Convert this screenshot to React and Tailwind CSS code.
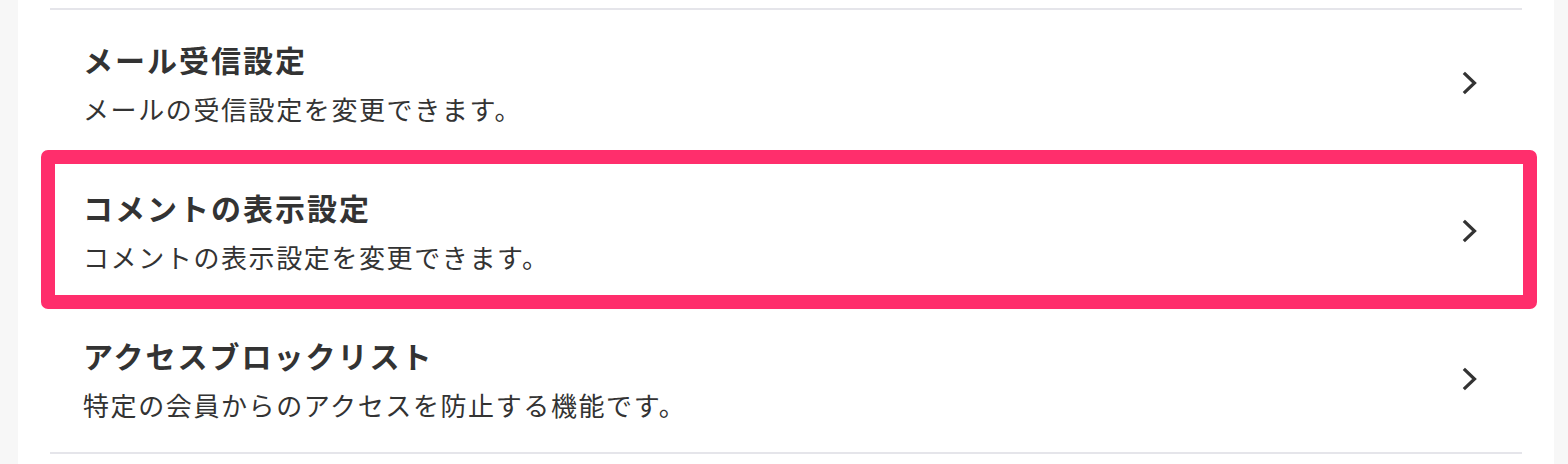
import React from "react";

const items = [
  { title: "メール受信設定", desc: "メールの受信設定を変更できます。" },
  { title: "コメントの表示設定", desc: "コメントの表示設定を変更できます。", highlight: true },
  { title: "アクセスブロックリスト", desc: "特定の会員からのアクセスを防止する機能です。" },
];

const Chevron = () => (
  <svg width="16" height="24" viewBox="0 0 16 24" fill="none" className="shrink-0">
    <path d="M3 3 L12.5 12 L3 21" stroke="#333333" strokeWidth="3.2" strokeLinecap="square" strokeLinejoin="miter" />
  </svg>
);

export default function App() {
  return (
    <div
      className="w-full h-[464px] bg-[#f7f7f7] pl-[18px] pr-[14px] overflow-hidden"
      style={{ fontFamily: '"Noto Sans CJK JP", "Noto Sans", sans-serif' }}
    >
      <div className="h-full bg-white px-[32px] pt-[8px]">
        <ul className="border-t-2 border-[#e5e5ea]">
          {items.map((item, i) => (
            <li key={i} className="relative border-b-2 border-[#e5e5ea]">
              <div className="flex items-center justify-between h-[146px] pl-[33px] pr-[44px]">
                <div className="flex flex-col text-[#333333]">
                  <p className="text-[30px] leading-[44px] font-bold tracking-[2px]">{item.title}</p>
                  <p className="mt-[8px] text-[26px] leading-[40px] tracking-[1.6px]">{item.desc}</p>
                </div>
                <Chevron />
              </div>
              {item.highlight && (
                <div className="pointer-events-none absolute -top-[8px] -bottom-[5px] -left-[9px] -right-[15px] border-[14px] border-[#ff2e6c] rounded-[7px]" />
              )}
            </li>
          ))}
        </ul>
      </div>
    </div>
  );
}
